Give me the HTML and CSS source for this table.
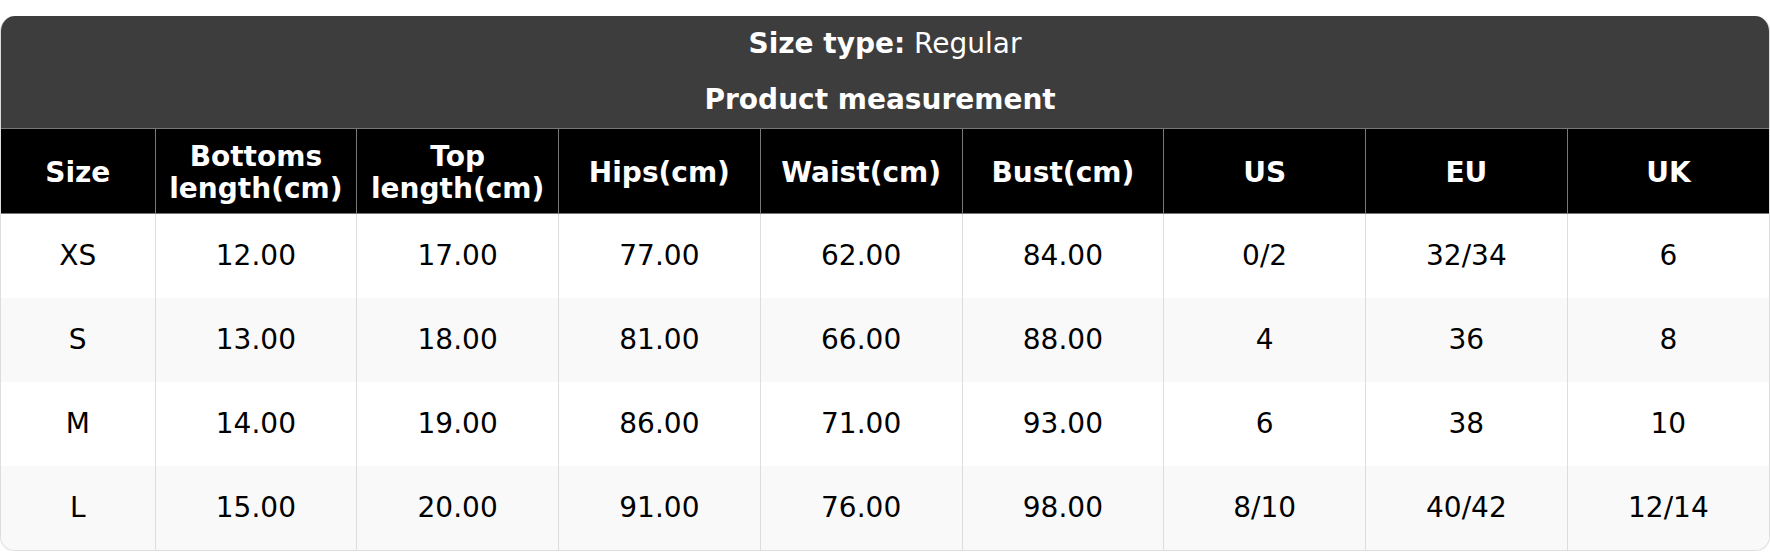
FILE: index.html
```html
<!DOCTYPE html>
<html>
<head>
<meta charset="utf-8">
<link rel="stylesheet" href="styles.css">
</head>
<body>
<div class="chart">
  <div class="chart-head">
    <div class="size-type"><b>Size type:</b> Regular</div>
    <div class="chart-title">Product measurement&nbsp;</div>
  </div>
  <table class="size-table">
    <colgroup>
      <col class="c-size"><col><col><col><col><col><col><col><col>
    </colgroup>
    <thead>
      <tr>
        <th>Size</th>
        <th>Bottoms<br>length(cm)</th>
        <th>Top<br>length(cm)</th>
        <th>Hips(cm)</th>
        <th>Waist(cm)</th>
        <th>Bust(cm)</th>
        <th>US</th>
        <th>EU</th>
        <th>UK</th>
      </tr>
    </thead>
    <tbody>
      <tr><td>XS</td><td>12.00</td><td>17.00</td><td>77.00</td><td>62.00</td><td>84.00</td><td>0/2</td><td>32/34</td><td>6</td></tr>
      <tr><td>S</td><td>13.00</td><td>18.00</td><td>81.00</td><td>66.00</td><td>88.00</td><td>4</td><td>36</td><td>8</td></tr>
      <tr><td>M</td><td>14.00</td><td>19.00</td><td>86.00</td><td>71.00</td><td>93.00</td><td>6</td><td>38</td><td>10</td></tr>
      <tr><td>L</td><td>15.00</td><td>20.00</td><td>91.00</td><td>76.00</td><td>98.00</td><td>8/10</td><td>40/42</td><td>12/14</td></tr>
    </tbody>
  </table>
</div>
</body>
</html>
```
FILE: styles.css
```css
html, body {
  margin: 0;
  padding: 0;
  background: #ffffff;
}
html { overflow: hidden; }
body {
  padding-top: 16px;
  font-family: "DejaVu Sans", Verdana, sans-serif;
  font-size: 28px;
  color: #000;
}
.chart {
  border: 1px solid #dddddd;
  border-top: none;
  border-radius: 15px;
  overflow: hidden;
  box-shadow: 0 1px 2px rgba(0,0,0,0.08);
}
.chart-head {
  background: #3d3d3d;
  color: #ffffff;
  text-align: center;
  padding: 11px 0 12px;
}
.size-type b { font-weight: bold; }
.chart-title {
  font-weight: bold;
  margin-top: 23px;
}
.size-table {
  width: 100%;
  border-collapse: collapse;
  table-layout: fixed;
}
.c-size { width: 154px; }
.size-table th {
  background: #000;
  color: #fff;
  font-weight: bold;
  padding: 12px 0 8px;
  border: 1px solid #777777;
  line-height: 32px;
}
.size-table th:first-child, .size-table td:first-child { border-left: none; }
.size-table th:last-child, .size-table td:last-child { border-right: none; }
.size-table td {
  text-align: center;
  padding: 25px 0;
  line-height: 34px;
  border-left: 1px solid #dddddd;
  border-right: 1px solid #dddddd;
}
.size-table tbody tr:nth-child(even) td { background: #f9f9f9; }
.size-table tbody tr:nth-child(odd) td { background: #ffffff; }
```
